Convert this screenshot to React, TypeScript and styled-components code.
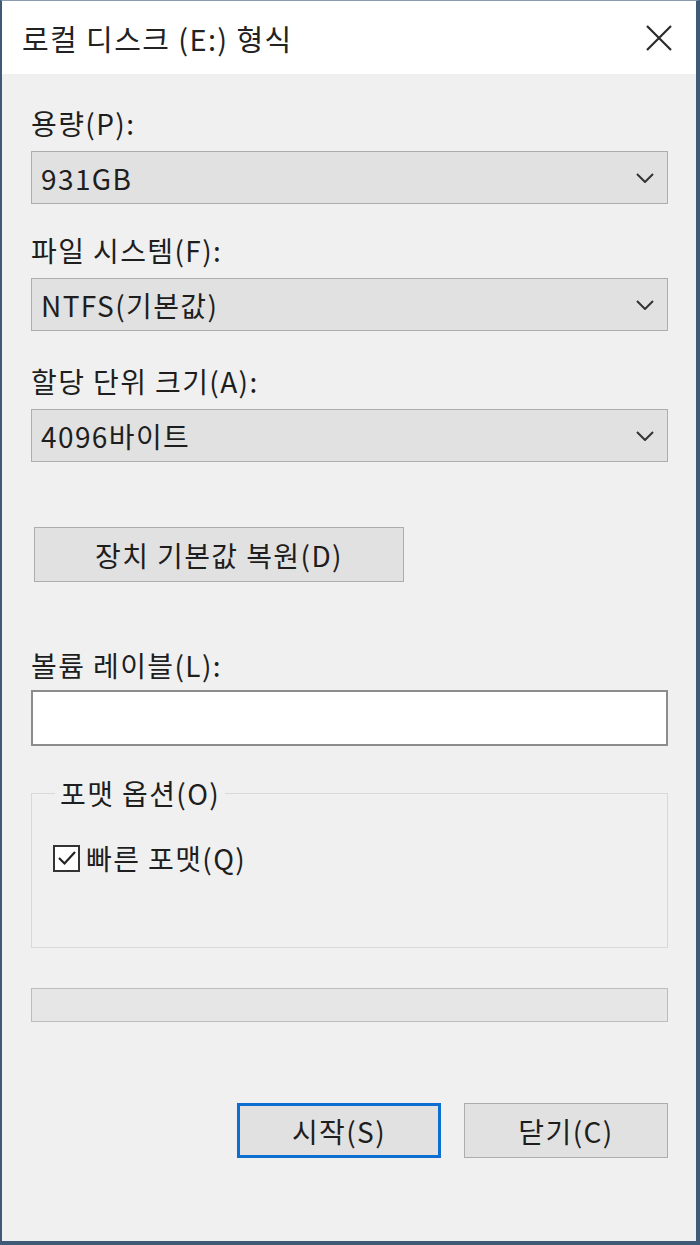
import React from "react";
import styled, { createGlobalStyle } from "styled-components";

const GlobalStyle = createGlobalStyle`
  html, body {
    margin: 0;
    padding: 0;
    background: #f0f0f0;
  }
  * {
    box-sizing: border-box;
  }
`;

const font = `"Noto Sans CJK KR", "Noto Sans", sans-serif`;

const Window = styled.div`
  width: 700px;
  height: 1245px;
  display: flex;
  flex-direction: column;
  background: #f0f0f0;
  border-top: 1px solid #8b9bb0;
  border-left: 2px solid #3e5a76;
  border-right: 4px solid #3e5a76;
  border-bottom: 4px solid #3e5a76;
  font-family: ${font};
  letter-spacing: 1.4px;
  color: #1e1e1e;
`;

const TitleBar = styled.div`
  height: 73px;
  flex-shrink: 0;
  background: #ffffff;
  display: flex;
  align-items: center;
  justify-content: space-between;
  padding: 0 22px 0 20px;
`;

const Title = styled.span`
  font-size: 29px;
  line-height: 36px;
  color: #222;
`;

const CloseButton = styled.button`
  width: 30px;
  height: 30px;
  padding: 0;
  border: none;
  background: transparent;
  display: flex;
  align-items: center;
  justify-content: center;
`;

const Body = styled.div`
  flex: 1;
  display: flex;
  flex-direction: column;
  padding: 34px 28px 0 29px;
`;

const Label = styled.div<{ $top?: number; $gap?: number }>`
  font-size: 28px;
  line-height: 30px;
  margin-top: ${(p) => p.$top ?? 0}px;
  margin-bottom: ${(p) => p.$gap ?? 13}px;
  white-space: nowrap;
`;

const Select = styled.div`
  height: 53px;
  background: #e1e1e1;
  border: 1px solid #adadad;
  display: flex;
  align-items: center;
  justify-content: space-between;
  padding: 0 13px 0 9px;
  font-size: 28px;
`;

const PushButton = styled.button<{ $default?: boolean }>`
  height: 55px;
  background: #e1e1e1;
  border: ${(p) => (p.$default ? "3px solid #0a6fd0" : "1px solid #adadad")};
  font-family: ${font};
  font-size: 28px;
  letter-spacing: 1.4px;
  color: #1e1e1e;
  padding: 0;
  display: flex;
  align-items: center;
  justify-content: center;
`;

const ResetButton = styled(PushButton)`
  width: 370px;
  margin: 65px 0 0 3px;
`;

const TextBox = styled.div`
  height: 56px;
  background: #ffffff;
  border: 2px solid #8c8c8c;
`;

const GroupBox = styled.fieldset`
  margin: 32px 0 0;
  height: 170px;
  border: 1px solid #d9d9d9;
  padding: 34px 20px 0 21px;
  min-width: 0;
`;

const Legend = styled.legend`
  font-size: 28px;
  line-height: 30px;
  padding: 0 5px 0 5px;
  margin-left: 2px;
`;

const CheckRow = styled.label`
  display: flex;
  align-items: center;
  gap: 6px;
  font-size: 28px;
  line-height: 32px;
`;

const CheckBox = styled.span`
  width: 27px;
  height: 27px;
  border: 2px solid #333;
  background: #fff;
  display: flex;
  align-items: center;
  justify-content: center;
`;

const Progress = styled.div`
  margin-top: 40px;
  height: 34px;
  background: #e6e6e6;
  border: 1px solid #bcbcbc;
`;

const Footer = styled.div`
  margin-top: 81px;
  display: flex;
  justify-content: flex-end;
  gap: 23px;
`;

const FooterButton = styled(PushButton)`
  width: 204px;
`;

function Chevron() {
  return (
    <svg width="18" height="10" viewBox="0 0 18 10">
      <path d="M1 1 L9 9 L17 1" fill="none" stroke="#333" strokeWidth="2" />
    </svg>
  );
}

function Field({ label, value, top }: { label: string; value: string; top?: number }) {
  return (
    <>
      <Label $top={top}>{label}</Label>
      <Select>
        <span>{value}</span>
        <Chevron />
      </Select>
    </>
  );
}

export default function App() {
  return (
    <>
      <GlobalStyle />
      <Window>
        <TitleBar>
          <Title>로컬 디스크 (E:) 형식</Title>
          <CloseButton aria-label="닫기">
            <svg width="26" height="26" viewBox="0 0 26 26">
              <path d="M1 1 L25 25 M25 1 L1 25" stroke="#2a2a2a" strokeWidth="2.2" />
            </svg>
          </CloseButton>
        </TitleBar>
        <Body>
          <Field label="용량(P):" value="931GB" />
          <Field label="파일 시스템(F):" value="NTFS(기본값)" top={31} />
          <Field label="할당 단위 크기(A):" value="4096바이트" top={35} />
          <ResetButton>장치 기본값 복원(D)</ResetButton>
          <Label $top={68} $gap={10}>
            볼륨 레이블(L):
          </Label>
          <TextBox />
          <GroupBox>
            <Legend>포맷 옵션(O)</Legend>
            <CheckRow>
              <CheckBox>
                <svg width="20" height="16" viewBox="0 0 20 16">
                  <path d="M2 8 L7.5 13.5 L18 2" fill="none" stroke="#222" strokeWidth="2.2" />
                </svg>
              </CheckBox>
              빠른 포맷(Q)
            </CheckRow>
          </GroupBox>
          <Progress />
          <Footer>
            <FooterButton $default>시작(S)</FooterButton>
            <FooterButton>닫기(C)</FooterButton>
          </Footer>
        </Body>
      </Window>
    </>
  );
}
